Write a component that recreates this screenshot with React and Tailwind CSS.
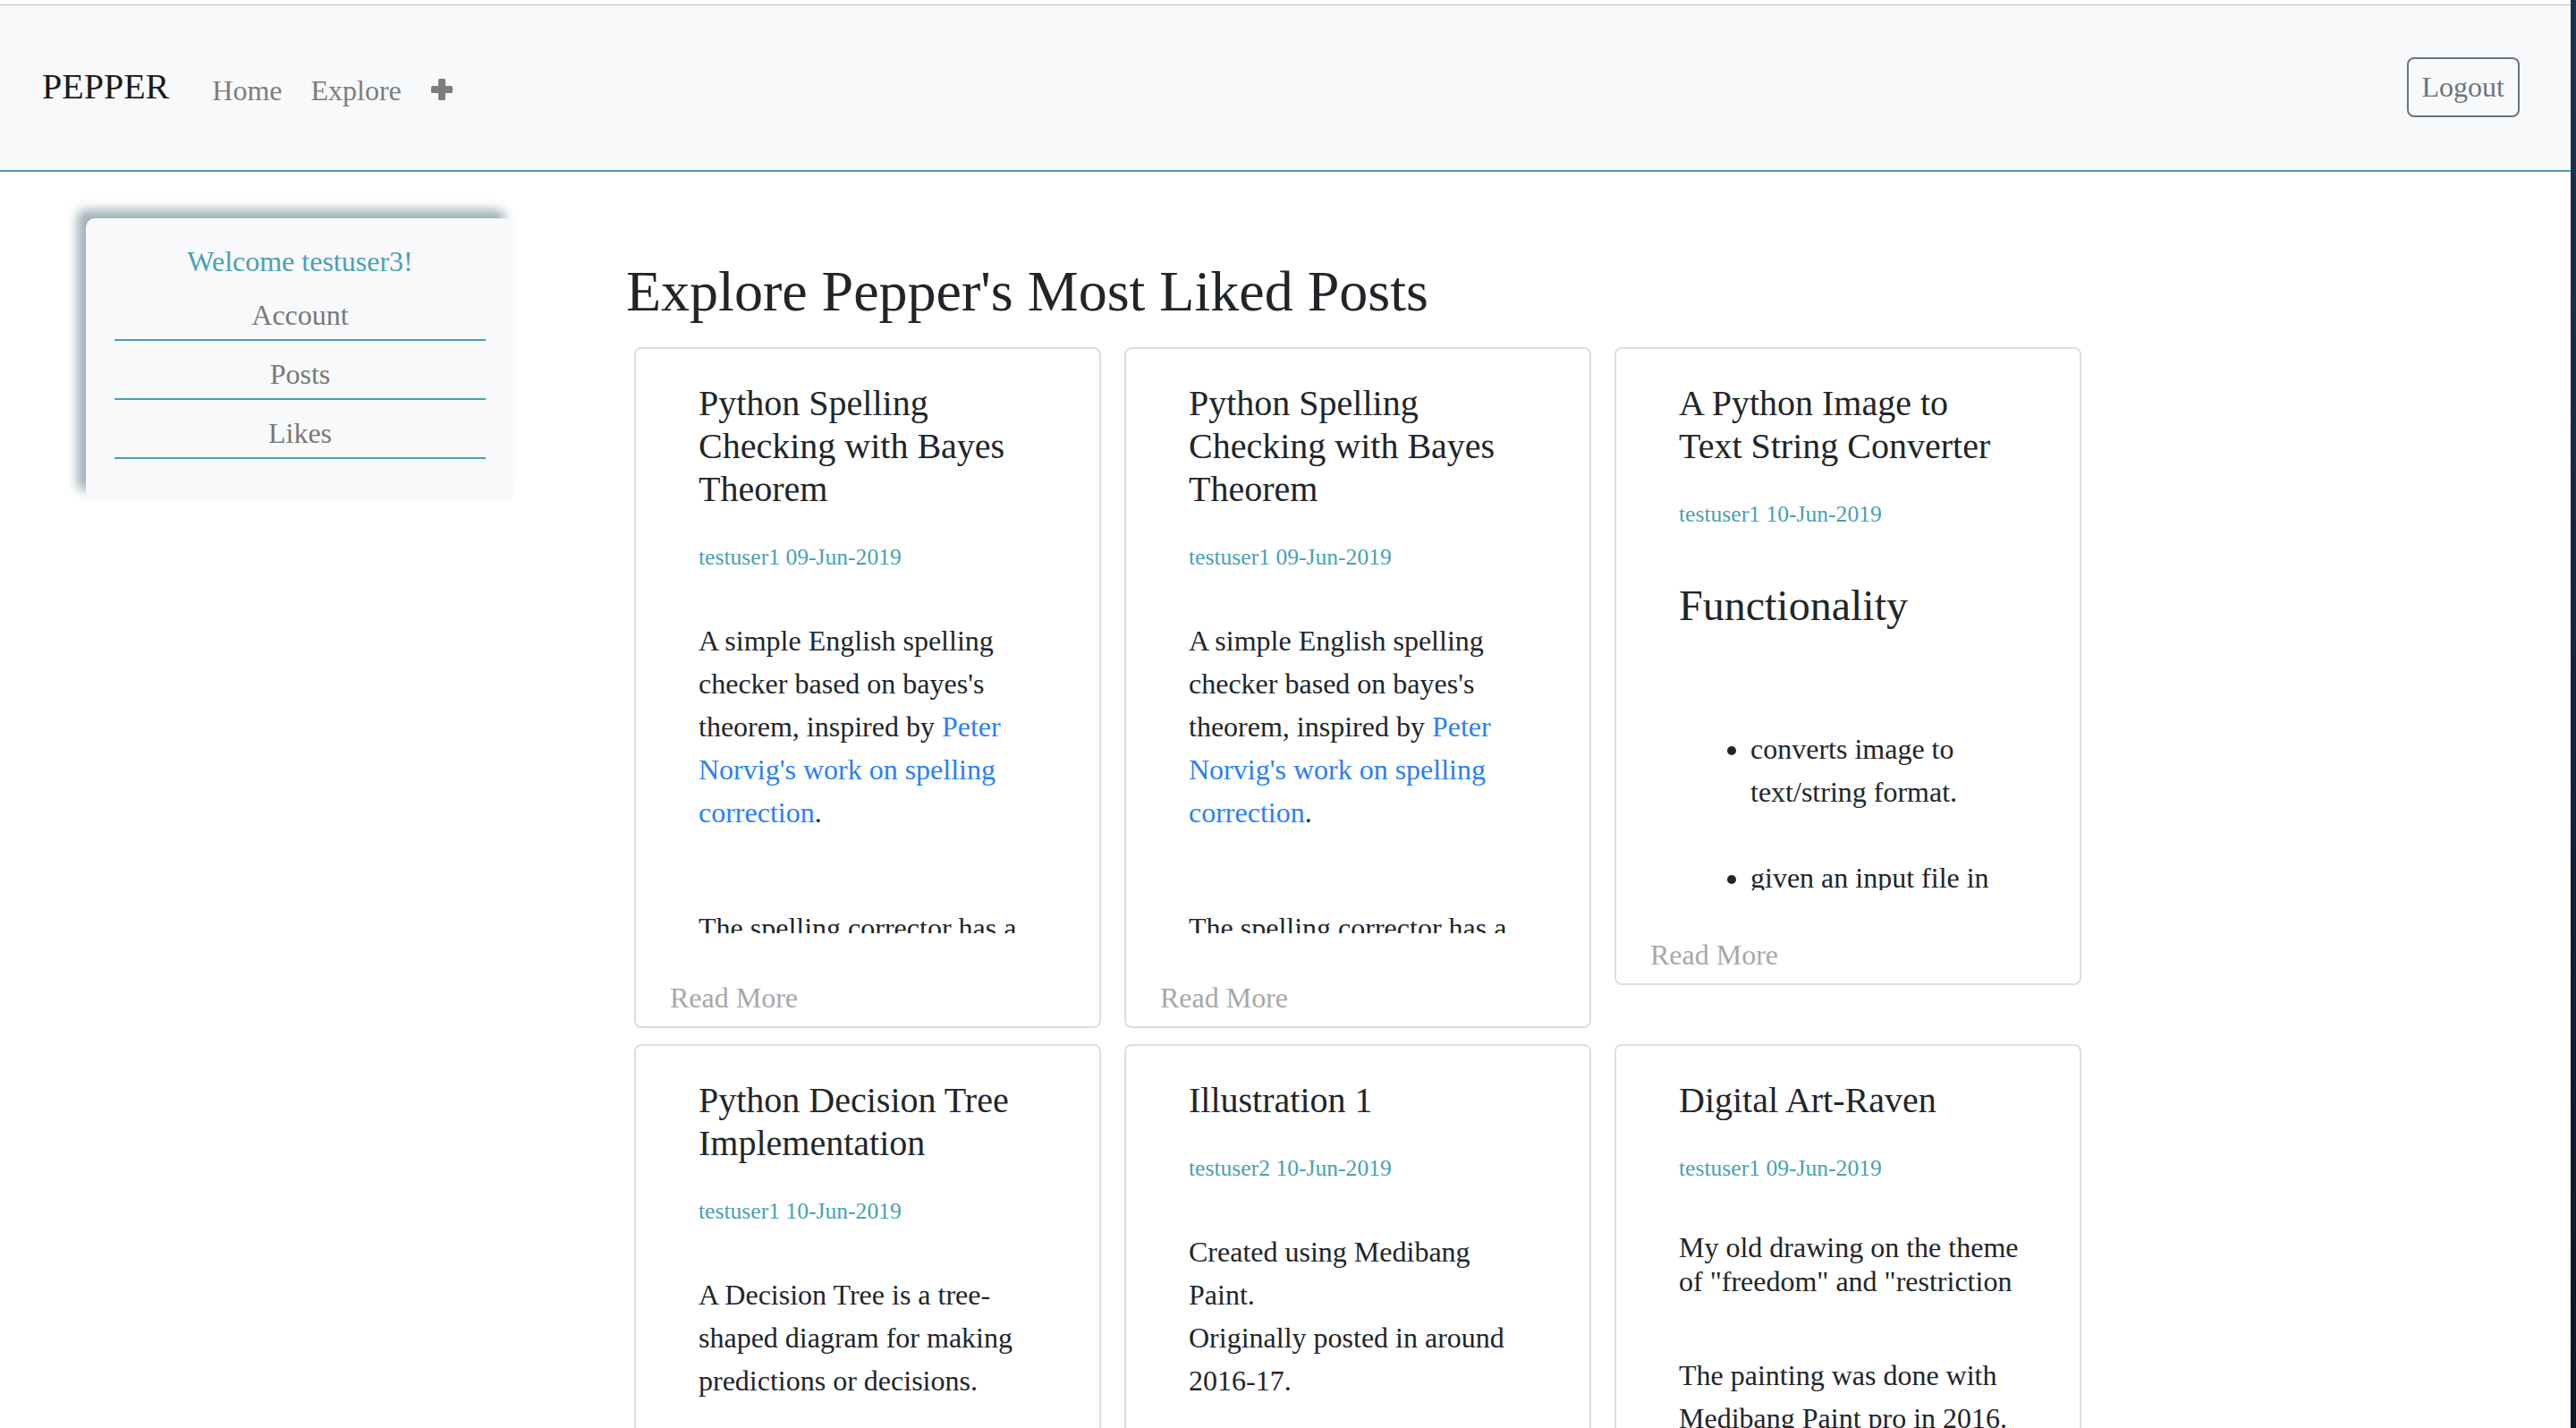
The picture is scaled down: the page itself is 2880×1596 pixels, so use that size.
import React from 'react'

function PlusIcon() {
    return (
        <svg width="24" height="24" viewBox="0 0 24 24" className="block">
            <rect x="8" y="0" width="8" height="24" rx="1.5" fill="#7c7d7e" />
            <rect x="0" y="8" width="24" height="8" rx="1.5" fill="#7c7d7e" />
        </svg>
    );
}

function PostCard({ title, author, date, children }) {
    return (
        <div className="bg-white border-2 border-[#dedede] rounded-[8px]">
            <div className="pt-[37px] pl-[70px] pr-[66px]">
                <h5 className="max-w-[362px] text-[40px] leading-[48px] text-[#212529]">{title}</h5>
                <p className="mt-[33px] text-[25.6px] leading-[38px] text-[#48a0b4]">{author} {date}</p>
                <div className="mt-[50px] h-[351px] overflow-hidden text-[32px] leading-[48px] text-[#212529]">
                    {children}
                </div>
            </div>
            <div className="mt-[48px] pl-[38px] pb-[8px] text-[32px] leading-[48px] text-[#a8a8a8]">Read More</div>
        </div>
    );
}

const LINK = 'text-[#2a7ff6]';

export default function App() {
    return (
        <div className="flex w-full h-[1596px] overflow-hidden bg-white font-['Liberation_Serif','Times_New_Roman',serif]">
            <div className="w-[2874px] shrink-0 pt-[5px]">
                {/* navbar */}
                <nav className="h-[187px] bg-[#f8f9fa] border-t border-t-[#bdbdbd] border-b-2 border-b-[#48a0b4] flex items-center pl-[47px] pr-[57px]">
                    <span className="mb-[3px] text-[40px] leading-[56px] text-[#1a1a1a]">PEPPER</span>
                    <div className="mt-[6px] ml-[48px] flex items-center gap-[32px] text-[32px] leading-[48px] text-[#7c7d7e]">
                        <a>Home</a>
                        <a>Explore</a>
                        <span className="ml-px mb-[3px]"><PlusIcon /></span>
                    </div>
                    <div className="flex-1" />
                    <button className="mb-[1px] border-2 border-[#6c757d] rounded-[8px] px-[15px] py-[8px] text-[32px] leading-[47px] text-[#6c757d]">Logout</button>
                </nav>

                <div className="flex items-start">
                    {/* sidebar */}
                    <div className="ml-[96px] mt-[52px] w-[479px] h-[315px] shrink-0 bg-[#f8f9fa] rounded-[10px] shadow-[-10px_-10px_12px_rgba(110,140,150,0.65)] pt-[24px] px-[32px] text-center text-[32px] leading-[48px]">
                        <p className="text-[#48a0b4] mb-[12px]">Welcome testuser3!</p>
                        <div className="pb-[3px] border-b-2 border-[#48a0b4] text-[#787878]">Account</div>
                        <div className="pt-[13px] pb-[3px] border-b-2 border-[#48a0b4] text-[#787878]">Posts</div>
                        <div className="pt-[13px] pb-[3px] border-b-2 border-[#48a0b4] text-[#787878]">Likes</div>
                    </div>

                    {/* main */}
                    <div className="ml-[125px] mt-[95px]">
                        <h2 className="text-[64px] leading-[77px] text-[#212529]">Explore Pepper's Most Liked Posts</h2>
                        <div className="ml-[9px] mt-[24px] grid grid-cols-[522px_522px_522px] gap-x-[26px] gap-y-[18px] items-start">
                            <PostCard title="Python Spelling Checking with Bayes Theorem" author="testuser1" date="09-Jun-2019">
                                <p>A simple English spelling checker based on bayes's theorem, inspired by <a className={LINK}>Peter Norvig's work on spelling correction</a>.</p>
                                <p className="mt-[81px]">The spelling corrector has a simple structure that takes a word and returns its most likely correction.</p>
                            </PostCard>
                            <PostCard title="Python Spelling Checking with Bayes Theorem" author="testuser1" date="09-Jun-2019">
                                <p>A simple English spelling checker based on bayes's theorem, inspired by <a className={LINK}>Peter Norvig's work on spelling correction</a>.</p>
                                <p className="mt-[81px]">The spelling corrector has a simple structure that takes a word and returns its most likely correction.</p>
                            </PostCard>
                            <PostCard title="A Python Image to Text String Converter" author="testuser1" date="10-Jun-2019">
                                <h4 className="mt-[4px] text-[48px] leading-[58px]">Functionality</h4>
                                <ul className="mt-[107px] pl-[80px] list-disc">
                                    <li className="mb-[48px]">converts image to text/string format.</li>
                                    <li>given an input file in image format, returns the text it holds.</li>
                                </ul>
                            </PostCard>

                            <PostCard title="Python Decision Tree Implementation" author="testuser1" date="10-Jun-2019">
                                <p>A Decision Tree is a tree-shaped diagram for making predictions or decisions.</p>
                            </PostCard>
                            <PostCard title="Illustration 1" author="testuser2" date="10-Jun-2019">
                                <p>Created using Medibang Paint.<br />Originally posted in around 2016-17.</p>
                            </PostCard>
                            <PostCard title="Digital Art-Raven" author="testuser1" date="09-Jun-2019">
                                <p className="leading-[38.4px]">My old drawing on the theme of "freedom" and "restriction</p>
                                <p className="mt-[61px]">The painting was done with Medibang Paint pro in 2016.</p>
                            </PostCard>
                        </div>
                    </div>
                </div>
            </div>
            <div className="flex-1 bg-gradient-to-b from-[#1e3350] via-[#12233a] to-[#0b1626]" />
        </div>
    );
}
